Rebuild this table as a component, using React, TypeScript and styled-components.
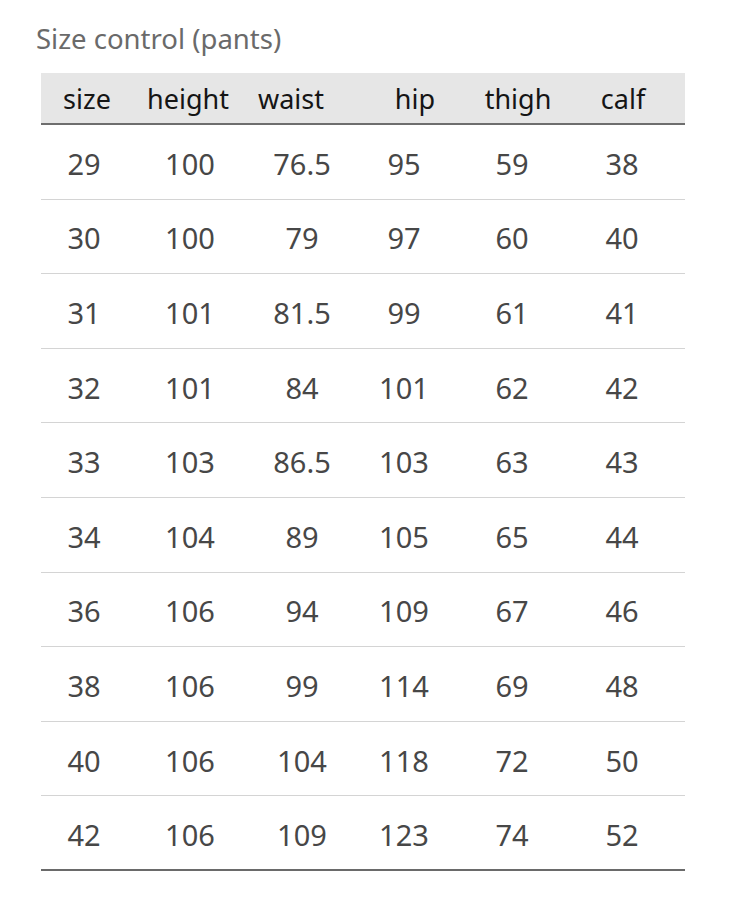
import { ReactElement } from 'react';
import styled, { createGlobalStyle } from 'styled-components';

const GlobalStyle = createGlobalStyle`
  body {
    margin: 0;
    background: #ffffff;
    font-family: 'Noto Sans', 'Liberation Sans', sans-serif;
  }
`;

const Wrapper = styled.div`
  width: 750px;
  height: 905px;
  padding: 21px 0 0 41px;
  box-sizing: border-box;
  background: #ffffff;
`;

const Title = styled.div`
  margin-left: -5px;
  height: 52px;
  font-size: 27.5px;
  line-height: 36px;
  color: #6a6a6a;
`;

const Table = styled.div`
  width: 644px;
`;

const COLS = '86px 126px 98px 106px 110px 110px 1fr';

const HeaderRow = styled.div`
  display: grid;
  grid-template-columns: ${COLS};
  align-items: center;
  height: 52px;
  background: #e6e6e6;
  border-bottom: 2px solid #6e6e6e;
  box-sizing: border-box;
`;

const HeaderCell = styled.div<{ $shift: number }>`
  text-align: center;
  font-size: 27px;
  color: #151515;
  transform: translateX(${(p) => p.$shift}px);
  white-space: nowrap;
`;

const Row = styled.div<{ $last?: boolean }>`
  display: grid;
  grid-template-columns: ${COLS};
  align-items: center;
  height: 74.6px;
  padding-top: 3px;
  box-sizing: border-box;
  border-bottom: ${(p) => (p.$last ? '2px solid #6a6a6a' : '1.5px solid #d4d4d4')};
`;

const Cell = styled.div`
  text-align: center;
  font-size: 29px;
  color: #474747;
  white-space: nowrap;
`;

const headers: [string, number][] = [
  ['size', 3],
  ['height', -2],
  ['waist', -11],
  ['hip', 11],
  ['thigh', 6],
  ['calf', 1],
];

const rows = [
  ['29', '100', '76.5', '95', '59', '38'],
  ['30', '100', '79', '97', '60', '40'],
  ['31', '101', '81.5', '99', '61', '41'],
  ['32', '101', '84', '101', '62', '42'],
  ['33', '103', '86.5', '103', '63', '43'],
  ['34', '104', '89', '105', '65', '44'],
  ['36', '106', '94', '109', '67', '46'],
  ['38', '106', '99', '114', '69', '48'],
  ['40', '106', '104', '118', '72', '50'],
  ['42', '106', '109', '123', '74', '52'],
];

export default function App(): ReactElement {
  return (
    <Wrapper>
      <GlobalStyle />
      <Title>Size control (pants)</Title>
      <Table>
        <HeaderRow>
          {headers.map(([label, shift]) => (
            <HeaderCell key={label} $shift={shift}>
              {label}
            </HeaderCell>
          ))}
        </HeaderRow>
        {rows.map((row, idx) => (
          <Row key={idx} $last={idx === rows.length - 1}>
            {row.map((value, i) => (
              <Cell key={i}>{value}</Cell>
            ))}
          </Row>
        ))}
      </Table>
    </Wrapper>
  );
}
